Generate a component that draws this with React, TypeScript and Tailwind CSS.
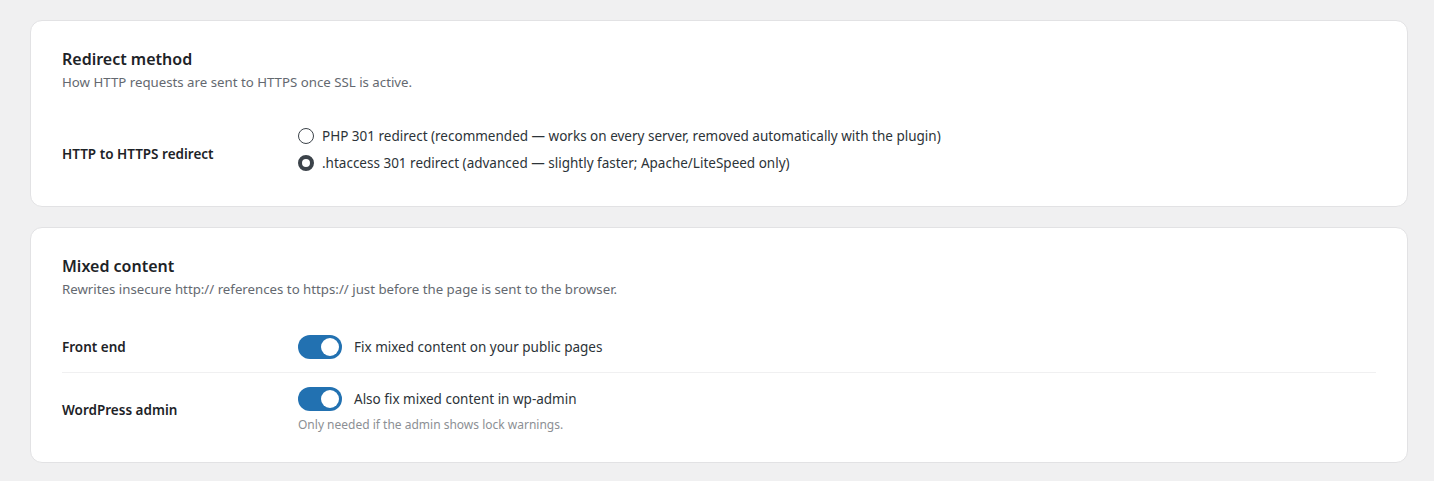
import { useState } from "react";

type RedirectMode = "php" | "htaccess";

const font = { fontFamily: '"Noto Sans", "Open Sans", sans-serif' };

function Toggle({ on, onChange }: { on: boolean; onChange: (v: boolean) => void }) {
  return (
    <button
      type="button"
      role="switch"
      aria-checked={on}
      onClick={() => onChange(!on)}
      className={`flex h-6 w-11 shrink-0 items-center rounded-full p-[3px] ${
        on ? "justify-end bg-[#2271b1]" : "justify-start bg-[#8c8f94]"
      }`}
    >
      <span className="h-[18px] w-[18px] rounded-full bg-white" />
    </button>
  );
}

function Radio({
  checked,
  label,
  onSelect,
}: {
  checked: boolean;
  label: string;
  onSelect: () => void;
}) {
  return (
    <label className="flex h-5 cursor-pointer items-center gap-2 text-[13.5px] text-[#2c3338]">
      <span
        onClick={onSelect}
        className={`h-4 w-4 shrink-0 rounded-full bg-white ${
          checked ? "border-4 border-[#3c434a]" : "border border-[#3c434a]"
        }`}
      />
      <span onClick={onSelect}>{label}</span>
    </label>
  );
}

function Card({
  title,
  description,
  children,
  className = "",
}: {
  title: string;
  description: string;
  children: React.ReactNode;
  className?: string;
}) {
  return (
    <section
      className={`rounded-xl border border-[#e2e2e4] bg-white px-[31px] pt-[27px] ${className}`}
    >
      <h2 className="text-[16px] font-semibold leading-[22px] text-[#1d2327]">{title}</h2>
      <p className="mt-0.5 text-[13.25px] leading-5 text-[#646970]">{description}</p>
      {children}
    </section>
  );
}

export default function App() {
  const [mode, setMode] = useState<RedirectMode>("htaccess");
  const [frontEnd, setFrontEnd] = useState(true);
  const [admin, setAdmin] = useState(true);

  return (
    <div className="min-h-screen bg-[#f0f0f1] pl-[30px] pr-[26px] pt-5 pb-5" style={font}>
      <div className="flex flex-col gap-5">
        <Card
          title="Redirect method"
          description="How HTTP requests are sent to HTTPS once SSL is active."
          className="pb-[15px]"
        >
          <div className="mt-[19px] grid grid-cols-[236px_1fr] pt-[15px] pb-[18px]">
            <div className="pt-[18px] text-[13.5px] font-semibold leading-5 text-[#1d2327]">
              HTTP to HTTPS redirect
            </div>
            <div className="flex flex-col gap-[7px]">
              <Radio
                checked={mode === "php"}
                onSelect={() => setMode("php")}
                label="PHP 301 redirect (recommended — works on every server, removed automatically with the plugin)"
              />
              <Radio
                checked={mode === "htaccess"}
                onSelect={() => setMode("htaccess")}
                label=".htaccess 301 redirect (advanced — slightly faster; Apache/LiteSpeed only)"
              />
            </div>
          </div>
        </Card>

        <Card
          title="Mixed content"
          description="Rewrites insecure http:// references to https:// just before the page is sent to the browser."
          className="pb-[14px]"
        >
          <div className="mt-[21px]">
            <div className="grid grid-cols-[236px_1fr] items-center border-b border-[#f0f0f1] pt-[15px] pb-[13px]">
              <div className="text-[13.5px] font-semibold leading-5 text-[#1d2327]">Front end</div>
              <div className="flex items-center gap-3">
                <Toggle on={frontEnd} onChange={setFrontEnd} />
                <span className="text-[13.5px] text-[#2c3338]">Fix mixed content on your public pages</span>
              </div>
            </div>
            <div className="grid grid-cols-[236px_1fr] items-center pt-[14px] pb-[15px]">
              <div className="text-[13.5px] font-semibold leading-5 text-[#1d2327]">WordPress admin</div>
              <div>
                <div className="flex items-center gap-3">
                  <Toggle on={admin} onChange={setAdmin} />
                  <span className="text-[13.5px] text-[#2c3338]">Also fix mixed content in wp-admin</span>
                </div>
                <p className="mt-1.5 text-[12px] leading-4 text-[#8c8f94]">
                  Only needed if the admin shows lock warnings.
                </p>
              </div>
            </div>
          </div>
        </Card>
      </div>
    </div>
  );
}
